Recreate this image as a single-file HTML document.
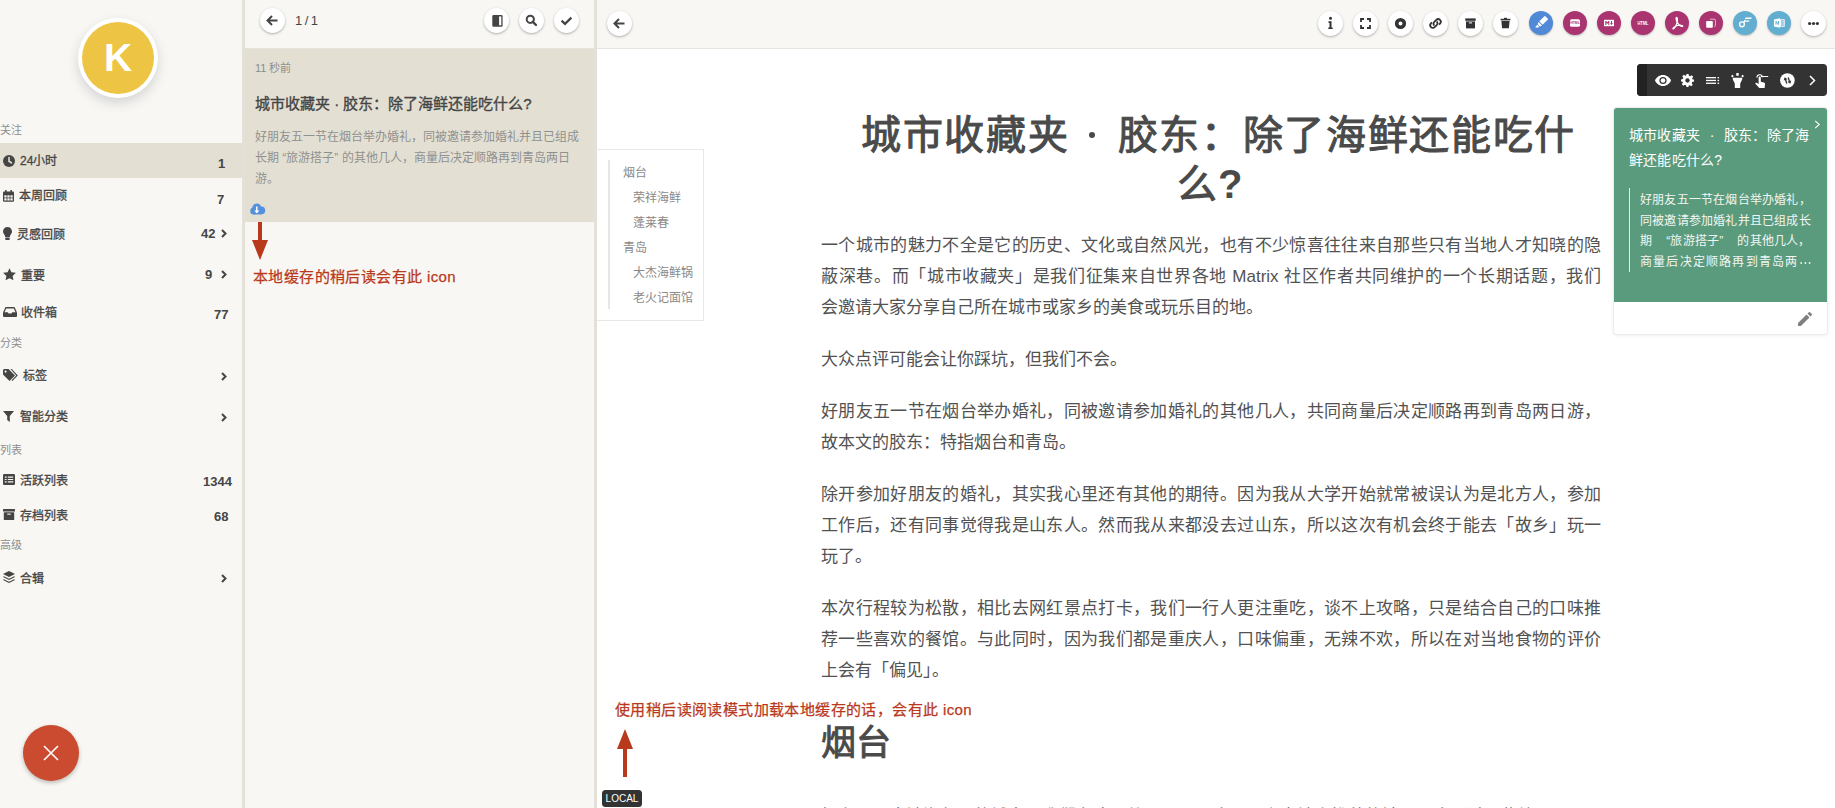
<!DOCTYPE html>
<html lang="zh-CN"><head><meta charset="utf-8">
<style>
*{box-sizing:border-box;margin:0;padding:0}
html,body{width:1835px;height:808px;overflow:hidden;background:#fff;font-family:"Liberation Sans",sans-serif;color:#444}
.a{position:absolute;white-space:nowrap}
#side{position:absolute;left:0;top:0;width:242px;height:808px;background:#f8f7f3}
.d1{position:absolute;top:0;height:808px;width:1px;background:#e2e1dc}
.d2{position:absolute;top:0;height:808px;width:2px;background:#e4e1d4}
#mid{position:absolute;left:245px;top:0;width:349px;height:808px;background:#f8f7f3}
#right{position:absolute;left:597px;top:0;width:1238px;height:808px;background:#fff}
.hdr{position:absolute;left:0;top:0;right:0;height:49px;background:#f8f7f3;border-bottom:1px solid #e6e4df}
.btn{position:absolute;width:25px;height:25px;border-radius:50%;background:#fff;box-shadow:0 1px 2.5px rgba(0,0,0,.3)}
.cb{position:absolute;width:24px;height:24px;border-radius:50%;box-shadow:0 1px 2px rgba(0,0,0,.25)}
.btn svg,.cb svg{position:absolute;left:0;top:0}
.lb{position:absolute;left:0;font-size:11px;color:#8e8e8e;line-height:14px}
.t{position:absolute;font-size:12px;color:#454545;line-height:16px;white-space:nowrap;-webkit-text-stroke:.3px #454545}
.n{position:absolute;font-size:13px;font-weight:bold;color:#454545;line-height:16px;white-space:nowrap}
.ic{position:absolute}
.toc{position:absolute;font-size:12px;color:#8a8a8a;line-height:16px;white-space:nowrap}
.p{position:absolute;left:224px;width:780px;font-size:17px;line-height:31px;color:#525252;text-align:justify}
.j{text-align-last:justify}
.p{white-space:nowrap}
.red{position:absolute;font-size:15px;color:#b9391c;line-height:18px;white-space:nowrap;-webkit-text-stroke:.25px #b9391c;letter-spacing:.4px}
</style></head><body>
<div id="side">
  <div class="a" style="left:78px;top:18px;width:80px;height:80px;border-radius:50%;background:#fff;box-shadow:0 5px 12px rgba(40,50,70,.17)"></div>
  <div class="a" style="left:82px;top:22px;width:72px;height:72px;border-radius:50%;background:#eec444;color:#fff;font-size:39px;font-weight:bold;text-align:center;line-height:72px">K</div>

  <div class="lb" style="top:123px">关注</div>
  <div class="a" style="left:0;top:143px;width:242px;height:35px;background:#e3e0d3"></div>
  <svg class="ic" style="left:3px;top:155px" width="12" height="12" viewBox="0 0 12 12"><circle cx="6" cy="6" r="6" fill="#454545"/><path d="M6 2.6V6.3L8.4 7.8" stroke="#e3e0d3" stroke-width="1.6" fill="none" stroke-linecap="round"/></svg>
  <div class="t" style="left:20px;top:153px">24小时</div>
  <div class="n" style="left:218px;top:156px">1</div>

  <svg class="ic" style="left:3px;top:189.5px" width="11" height="12" viewBox="0 0 11 12"><rect x="0" y="1.6" width="11" height="10.2" rx="1" fill="#454545"/><rect x="2" y="0" width="1.6" height="2.8" rx=".5" fill="#454545"/><rect x="7.4" y="0" width="1.6" height="2.8" rx=".5" fill="#454545"/><g fill="#f8f7f3"><rect x="1.3" y="5.3" width="2.3" height="2.2"/><rect x="4.35" y="5.3" width="2.3" height="2.2"/><rect x="7.4" y="5.3" width="2.3" height="2.2"/><rect x="1.3" y="8.3" width="2.3" height="2.2"/><rect x="4.35" y="8.3" width="2.3" height="2.2"/><rect x="7.4" y="8.3" width="2.3" height="2.2"/></g></svg>
  <div class="t" style="left:19px;top:188px">本周回顾</div>
  <div class="n" style="left:217px;top:192px">7</div>

  <svg class="ic" style="left:3px;top:227px" width="9" height="13" viewBox="0 0 9 13"><path d="M4.5 0C2 0 0 2 0 4.4c0 1.8 1.3 2.8 2 4.3V10h5V8.7c.7-1.5 2-2.5 2-4.3C9 2 7 0 4.5 0z" fill="#454545"/><rect x="2.2" y="10.6" width="4.6" height="2.4" rx="1" fill="#454545"/></svg>
  <div class="t" style="left:17px;top:227px">灵感回顾</div>
  <div class="n" style="left:201px;top:226px">42</div>
  <svg class="ic" style="left:221px;top:229px" width="6" height="9" viewBox="0 0 6 9"><path d="M1 1l3.5 3.5L1 8" stroke="#454545" stroke-width="2" fill="none"/></svg>

  <svg class="ic" style="left:3px;top:268px" width="13" height="13" viewBox="0 0 24 23"><path d="M12 0l3.5 7.4 8.3 1-6.1 5.7 1.6 8.2L12 18.3l-7.3 4 1.6-8.2L.2 8.4l8.3-1z" fill="#454545"/></svg>
  <div class="t" style="left:21px;top:268px">重要</div>
  <div class="n" style="left:205px;top:267px">9</div>
  <svg class="ic" style="left:221px;top:270px" width="6" height="9" viewBox="0 0 6 9"><path d="M1 1l3.5 3.5L1 8" stroke="#454545" stroke-width="2" fill="none"/></svg>

  <svg class="ic" style="left:3px;top:307px" width="14" height="10" viewBox="0 0 14 10"><path d="M2.5 0h9L14 5.5V9a1 1 0 0 1-1 1H1a1 1 0 0 1-1-1V5.5z" fill="#454545"/><path d="M3.2 1.6h7.6l1.7 3.6H9.3L8.4 6.6H5.6L4.7 5.2H1.5z" fill="#f8f7f3"/></svg>
  <div class="t" style="left:21px;top:305px">收件箱</div>
  <div class="n" style="left:214px;top:307px">77</div>

  <div class="lb" style="top:336px">分类</div>
  <svg class="ic" style="left:3px;top:369px" width="15" height="13" viewBox="0 0 15 13"><path d="M0 1v4.5l6.5 6.5 5.5-5.5L5.5 0H1z" fill="#454545"/><circle cx="2.6" cy="2.6" r="1.1" fill="#f8f7f3"/><path d="M7.5 0h1.3l6 6.5-5.5 5.5-.8-.7 4.7-4.8z" fill="#454545"/></svg>
  <div class="t" style="left:23px;top:368px">标签</div>
  <svg class="ic" style="left:221px;top:372px" width="6" height="9" viewBox="0 0 6 9"><path d="M1 1l3.5 3.5L1 8" stroke="#454545" stroke-width="2" fill="none"/></svg>

  <svg class="ic" style="left:3px;top:411px" width="11" height="11" viewBox="0 0 11 11"><path d="M0 0h11L6.8 5v6L4.2 9V5z" fill="#454545"/></svg>
  <div class="t" style="left:20px;top:409px">智能分类</div>
  <svg class="ic" style="left:221px;top:413px" width="6" height="9" viewBox="0 0 6 9"><path d="M1 1l3.5 3.5L1 8" stroke="#454545" stroke-width="2" fill="none"/></svg>

  <div class="lb" style="top:443px">列表</div>
  <svg class="ic" style="left:3px;top:474px" width="12" height="11" viewBox="0 0 12 11"><rect width="12" height="11" rx="1.2" fill="#454545"/><path d="M1.8 3.1h1.8M4.8 3.1h5.4M1.8 5.5h1.8M4.8 5.5h5.4M1.8 7.9h1.8M4.8 7.9h5.4" stroke="#f8f7f3" stroke-width="1.2"/></svg>
  <div class="t" style="left:20px;top:473px">活跃列表</div>
  <div class="n" style="left:203px;top:474px">1344</div>

  <svg class="ic" style="left:3px;top:509px" width="12" height="11" viewBox="0 0 12 11"><rect width="12" height="2.6" rx=".5" fill="#454545"/><rect x=".8" y="3.3" width="10.4" height="7.7" rx=".6" fill="#454545"/><rect x="4.3" y="4.6" width="3.4" height="1.1" fill="#f8f7f3"/></svg>
  <div class="t" style="left:20px;top:508px">存档列表</div>
  <div class="n" style="left:214px;top:509px">68</div>

  <div class="lb" style="top:538px">高级</div>
  <svg class="ic" style="left:3px;top:571px" width="12" height="12" viewBox="0 0 12 12"><path d="M6 0l6 3-6 3-6-3z" fill="#454545"/><path d="M.8 5.2L6 7.8l5.2-2.6L12 6 6 9 0 6z" fill="#454545"/><path d="M.8 8.2L6 10.8l5.2-2.6L12 9 6 12 0 9z" fill="#454545"/></svg>
  <div class="t" style="left:20px;top:571px">合辑</div>
  <svg class="ic" style="left:221px;top:574px" width="6" height="9" viewBox="0 0 6 9"><path d="M1 1l3.5 3.5L1 8" stroke="#454545" stroke-width="2" fill="none"/></svg>

  <div class="a" style="left:23px;top:725px;width:56px;height:56px;border-radius:50%;background:#cb4b31;box-shadow:0 2px 4px rgba(0,0,0,.25)"></div>
  <svg class="ic" style="left:43px;top:745px" width="16" height="16" viewBox="0 0 16 16"><path d="M1 1L15 15M15 1L1 15" stroke="#fff" stroke-width="1.6"/></svg>
</div>
<div class="d1" style="left:242px"></div><div class="d2" style="left:243px"></div>

<div id="mid">
  <div class="hdr"></div>
  <div class="btn" style="left:15px;top:8px"><svg width="25" height="25" viewBox="0 0 25 25"><path d="M17.5 12.5H8M12 8l-4.5 4.5L12 17" stroke="#454545" stroke-width="2" fill="none"/></svg></div>
  <div class="a" style="left:50px;top:13px;font-size:13px;color:#454545;line-height:16px;letter-spacing:-.6px">1 / 1</div>
  <div class="btn" style="left:239px;top:8px"><svg width="25" height="25" viewBox="0 0 25 25"><rect x="8.3" y="7" width="10.3" height="11.7" rx="1.3" fill="#454545"/><rect x="15.1" y="8.4" width="2.2" height="8.9" fill="#fff"/></svg></div>
  <div class="btn" style="left:274px;top:8px"><svg width="25" height="25" viewBox="0 0 25 25"><circle cx="11.3" cy="11.3" r="3.6" fill="none" stroke="#454545" stroke-width="2"/><path d="M13.8 13.8L17 17" stroke="#454545" stroke-width="2.4" stroke-linecap="round"/></svg></div>
  <div class="btn" style="left:309px;top:8px"><svg width="25" height="25" viewBox="0 0 25 25"><path d="M7.6 12.6l3.4 3.3 6.4-6.3" stroke="#454545" stroke-width="2.2" fill="none" stroke-linejoin="miter"/></svg></div>

  <div class="a" style="left:0;top:49px;width:349px;height:173px;background:#e3e0d3"></div>
  <div class="a" style="left:10px;top:61px;font-size:11px;color:#8c8c8c;line-height:14px">11 秒前</div>
  <div class="a" style="left:10px;top:95px;font-size:15px;color:#454545;line-height:18px;-webkit-text-stroke:.35px #454545">城市收藏夹 · 胶东：除了海鲜还能吃什么?</div>
  <div class="a" style="left:10px;top:127px;width:330px;font-size:12px;color:#909090;line-height:21px;white-space:normal">好朋友五一节在烟台举办婚礼，同被邀请参加婚礼并且已组成长期 “旅游搭子” 的其他几人，商量后决定顺路再到青岛两日游。</div>
  <svg class="ic" style="left:5px;top:202.5px" width="16" height="12" viewBox="0 0 16 12"><g fill="#5590dc"><circle cx="3.7" cy="8" r="3.5"/><circle cx="6.8" cy="5" r="4.6"/><circle cx="11.4" cy="7.4" r="3.8"/><rect x="3.7" y="7" width="7.7" height="4.5"/></g><path d="M6.8 3.6v5" stroke="#fff" stroke-width="1.5"/><path d="M4.3 7.6h5L6.8 10.4z" fill="#fff"/></svg>
  <svg class="ic" style="left:5.5px;top:222px" width="18" height="38" viewBox="0 0 18 38"><rect x="7" y="0" width="4" height="20" fill="#b9391c"/><path d="M1 18h16L9 38z" fill="#b9391c"/></svg>
  <div class="red" style="left:8px;top:268px">本地缓存的稍后读会有此 icon</div>
</div>
<div class="d1" style="left:594px"></div><div class="d2" style="left:595px"></div>

<div id="right">
  <div class="hdr"></div>
  <div class="btn" style="left:10px;top:11px"><svg width="25" height="25" viewBox="0 0 25 25"><path d="M17.5 12.5H8M12 8l-4.5 4.5L12 17" stroke="#454545" stroke-width="2" fill="none"/></svg></div>

  <div class="btn" style="left:721px;top:11px"><svg width="25" height="25" viewBox="0 0 25 25"><circle cx="12.5" cy="7.3" r="1.5" fill="#333"/><path d="M10.5 10.3h3v6.2h1.2v1.6h-4.4v-1.6h1.2v-4.6h-1z" fill="#333"/></svg></div>
  <div class="btn" style="left:756px;top:11px"><svg width="25" height="25" viewBox="0 0 25 25"><path d="M8 11V8h3M14 8h3v3M17 14v3h-3M11 17H8v-3" stroke="#333" stroke-width="1.8" fill="none"/></svg></div>
  <div class="btn" style="left:791px;top:11px"><svg width="25" height="25" viewBox="0 0 25 25"><circle cx="12.5" cy="12.5" r="3.8" fill="none" stroke="#333" stroke-width="3.6"/></svg></div>
  <div class="btn" style="left:826px;top:11px"><svg width="25" height="25" viewBox="0 0 25 25"><path d="M11.3 14.6a2.6 2.6 0 0 1 0-3.7l2-2a2.6 2.6 0 0 1 3.7 3.7l-1 1M13.7 10.4a2.6 2.6 0 0 1 0 3.7l-2 2a2.6 2.6 0 0 1-3.7-3.7l1-1" stroke="#333" stroke-width="1.8" fill="none"/></svg></div>
  <div class="btn" style="left:861px;top:11px"><svg width="25" height="25" viewBox="0 0 25 25"><rect x="7.3" y="7.4" width="10.4" height="2.4" fill="#333"/><rect x="8" y="10.4" width="9" height="7" fill="#333"/><rect x="11" y="11.4" width="3" height="1" fill="#fff"/></svg></div>
  <div class="btn" style="left:896px;top:11px"><svg width="25" height="25" viewBox="0 0 25 25"><rect x="7.6" y="7.8" width="9.8" height="1.6" fill="#333"/><rect x="11" y="6.8" width="3" height="1.2" fill="#333"/><path d="M8.4 10h8.2l-.7 7.2H9.1z" fill="#333"/></svg></div>
  <div class="cb" style="left:932px;top:11px;background:#508ad6"><svg width="24" height="24" viewBox="0 0 24 24"><g transform="rotate(45 13 11)"><rect x="10.6" y="4.5" width="4.8" height="8" rx=".6" fill="#fff"/><path d="M10.6 13.4h4.8l-.8 2.2h-3.2z" fill="#fff"/><path d="M11.8 16.2h2.4v1.6l-2.4 1.8z" fill="#fff"/></g></svg></div>
  <div class="cb" style="left:966px;top:11px;background:#a93470"><svg width="24" height="24" viewBox="0 0 24 24"><rect x="7" y="8.3" width="10" height="7.5" rx="1.6" fill="#fff"/><text x="12" y="13.2" font-size="3.4" font-family="Liberation Sans" font-weight="bold" text-anchor="middle" fill="#a93470">HTML</text></svg></div>
  <div class="cb" style="left:1000px;top:11px;background:#a93470"><svg width="24" height="24" viewBox="0 0 24 24"><rect x="7" y="8.8" width="10" height="6.4" fill="#fff"/><path d="M8.3 14V10h1l1 1.4 1-1.4h1v4h-1v-2.3l-1 1.2-1-1.2V14zM14 10h1v2.2h1l-1.5 1.8-1.5-1.8h1z" fill="#a93470"/></svg></div>
  <div class="cb" style="left:1034px;top:11px;background:#a93470"><svg width="24" height="24" viewBox="0 0 24 24"><text x="12" y="13.6" font-size="4.6" font-family="Liberation Sans" font-weight="bold" text-anchor="middle" fill="#fff" textLength="11" lengthAdjust="spacingAndGlyphs">HTML</text></svg></div>
  <div class="cb" style="left:1068px;top:11px;background:#a93470"><svg width="24" height="24" viewBox="0 0 24 24"><path d="M11.6 6.5c-.8 0-.6 2.4.6 4.8 1 2 2.6 3.8 4.5 4.1 1.4.2 1.5-.9-.3-1.1-2.4-.3-5.6.5-7.6 2.1-1.3 1.1-1 1.8-.2 1.3 1.5-1 3.1-4.6 3.6-7 .4-2.5.2-4.2-.6-4.2z" stroke="#fff" stroke-width="1.3" fill="none"/></svg></div>
  <div class="cb" style="left:1102px;top:11px;background:#a93470"><svg width="24" height="24" viewBox="0 0 24 24"><path d="M10.8 8.2h4.6a1 1 0 0 1 1 1v5.4a1 1 0 0 1-1 1" fill="none" stroke="rgba(255,255,255,.65)" stroke-width="1"/><rect x="7.2" y="10" width="6.6" height="6.8" rx=".8" fill="#fff"/></svg></div>
  <div class="cb" style="left:1136px;top:11px;background:#62aed0"><svg width="24" height="24" viewBox="0 0 24 24"><circle cx="9" cy="13.3" r="2.4" fill="none" stroke="#fff" stroke-width="1.4"/><path d="M12.6 6.6h6.4l-1 1.4h-6.2zM11.4 9.4h5.2l-1 1.4h-5z" fill="#fff"/><path d="M10.6 11.6l1.6-2.6" stroke="#fff" stroke-width="1.2"/></svg></div>
  <div class="cb" style="left:1170px;top:11px;background:#62aed0"><svg width="24" height="24" viewBox="0 0 24 24"><path d="M7 8.5l6.2-1.2v9.4L7 15.5z" fill="#fff"/><path d="M8.5 13.8V10h.9l1.6 2.4V10h.9v3.8h-.9L9.4 11.4v2.4z" fill="#62aed0"/><rect x="13.6" y="8.8" width="3.6" height="6.4" fill="none" stroke="#fff" stroke-width="1"/><path d="M13.6 10.9h3.6M13.6 13h3.6" stroke="#fff" stroke-width=".8"/></svg></div>
  <div class="btn" style="left:1204px;top:11px"><svg width="25" height="25" viewBox="0 0 25 25"><circle cx="8.6" cy="12.5" r="1.6" fill="#333"/><circle cx="12.5" cy="12.5" r="1.6" fill="#333"/><circle cx="16.4" cy="12.5" r="1.6" fill="#333"/></svg></div>

  <div class="a" style="left:1040px;top:64px;width:190px;height:32px;border-radius:4px;background:#333;overflow:hidden"><div class="a" style="left:0;top:0;width:10px;height:32px;background:#222"></div></div>
  <svg class="ic" style="left:1058px;top:75px" width="16" height="11" viewBox="0 0 16 11"><path d="M8 0C4.2 0 1.4 2.4 0 5.5 1.4 8.6 4.2 11 8 11s6.6-2.4 8-5.5C14.6 2.4 11.8 0 8 0z" fill="#fff"/><circle cx="8" cy="5.5" r="3.6" fill="#333"/><circle cx="8" cy="5.5" r="2.3" fill="#fff"/></svg>
  <svg class="ic" style="left:1084px;top:74px" width="13" height="13" viewBox="0 0 24 24"><path d="M10 0h4l.7 3.3 2.2.9 2.8-1.9 2.8 2.8-1.9 2.8.9 2.2L24 10v4l-3.3.7-.9 2.2 1.9 2.8-2.8 2.8-2.8-1.9-2.2.9L14 24h-4l-.7-3.3-2.2-.9-2.8 1.9-2.8-2.8 1.9-2.8-.9-2.2L0 14v-4l3.3-.7.9-2.2-1.9-2.8 2.8-2.8 2.8 1.9 2.2-.9z" fill="#fff"/><circle cx="12" cy="12" r="4" fill="#333"/></svg>
  <svg class="ic" style="left:1109px;top:76px" width="14" height="9" viewBox="0 0 14 9"><g fill="#fff"><rect x="0" y="1" width="10" height="1.3"/><rect x="0" y="3.8" width="10" height="1.3"/><rect x="0" y="6.6" width="10" height="1.3"/><rect x="11.5" y="1" width="1.6" height="1.3"/><rect x="11.5" y="3.8" width="1.6" height="1.3"/><rect x="11.5" y="6.6" width="1.6" height="1.3"/></g></svg>
  <svg class="ic" style="left:1133px;top:72px" width="15" height="17" viewBox="0 0 15 17"><path d="M2.8 5.8h9.4v1.6L10.2 11.6V16H4.8V11.6L2.8 7.4z" fill="#fff"/><rect x="6.3" y="1" width="2.4" height="2.8" fill="#fff"/><path d="M2.4 2.7l1.4 1.4-1.4 1.4L1 4.1zM12.6 2.7l1.4 1.4-1.4 1.4-1.4-1.4z" fill="#fff"/></svg>
  <svg class="ic" style="left:1158px;top:73px" width="14" height="15" viewBox="0 0 14 15"><path d="M3.6 4.6a1.1 1.1 0 0 1 2.2 0v4.2l3 .6c.9.2 1.3.8 1.2 1.7L9.6 15H4.3L.6 10.9c-.6-.7.2-1.6 1-1.1l2 1.2z" fill="#fff"/><path d="M2 4.6a2.7 2.7 0 0 1 5.4-.4M6 3.5h7.2" stroke="#fff" stroke-width="1.1" fill="none"/></svg>
  <svg class="ic" style="left:1183px;top:73px" width="15" height="15" viewBox="0 0 15 15"><circle cx="7.4" cy="7.5" r="7.3" fill="#fff"/><g transform="rotate(-18 7.5 7.5)"><path d="M5.9 10.2V4.6" stroke="#333" stroke-width="1.3"/><path d="M3.9 6.2l2-2.6 2 2.6z" fill="#333"/><path d="M9.1 4.8v5.6" stroke="#333" stroke-width="1.3"/><path d="M7.1 8.8l2 2.6 2-2.6z" fill="#333"/></g></svg>
  <svg class="ic" style="left:1212px;top:75px" width="7" height="11" viewBox="0 0 7 11"><path d="M1 1l4.5 4.5L1 10" stroke="#fff" stroke-width="1.5" fill="none"/></svg>

  <div class="a" style="left:1017px;top:108px;width:213px;height:226px;border-radius:3px;background:#fff;box-shadow:0 0 0 1px #ececec,0 1px 4px rgba(0,0,0,.10);overflow:hidden">
    <div class="a" style="left:0;top:0;width:213px;height:194px;background:#5b9b7d"></div>
    <svg class="ic" style="left:200px;top:12px" width="7" height="9" viewBox="0 0 7 9"><path d="M1.2 .8l4 3.7-4 3.7" stroke="#fff" stroke-width="1.1" fill="none"/></svg>
    <div class="a" style="left:15px;top:15px;font-size:14px;line-height:25px;color:#fff;letter-spacing:.2px">城市收藏夹<span style="display:inline-block;width:24px;text-align:center;letter-spacing:0">·</span>胶东：除了海</div>
    <div class="a" style="left:15px;top:40px;font-size:14px;line-height:25px;color:#fff;letter-spacing:.2px">鲜还能吃什么?</div>
    <div class="a" style="left:15px;top:80px;width:1px;height:84px;background:#e6efe9"></div>
    <div class="a" style="left:26px;top:82px;font-size:12px;line-height:20.7px;color:#f2f6f3;letter-spacing:.2px">好朋友五一节在烟台举办婚礼，<br>同被邀请参加婚礼并且已组成长<br>期<span style="display:inline-block;width:14px"></span>“旅游搭子”<span style="display:inline-block;width:14px"></span>的其他几人，<br><span style="letter-spacing:1.2px">商量后决定顺路再到青岛两</span><svg width="14" height="10" viewBox="0 0 14 10" style="vertical-align:-1px"><circle cx="3.2" cy="6" r=".9" fill="#f2f6f3"/><circle cx="7.4" cy="6" r=".9" fill="#f2f6f3"/><circle cx="11.6" cy="6" r=".9" fill="#f2f6f3"/></svg></div>
    <svg class="ic" style="left:184px;top:204px" width="14" height="14" viewBox="0 0 14 14"><path d="M0 11.1V14h2.9l8.6-8.6-2.9-2.9zM13.8 3.1a.8.8 0 0 0 0-1.1L12 .2a.8.8 0 0 0-1.1 0L9.5 1.6l2.9 2.9z" fill="#808080"/></svg>
  </div>
  <div class="a" style="left:0;top:149px;width:107px;height:172px;background:#fff;border:1px solid #e8e8e8;border-left:none"></div>
  <div class="a" style="left:11px;top:160px;width:2px;height:149px;background:#e6e6e6"></div>
  <div class="toc" style="left:26px;top:165px">烟台</div>
  <div class="toc" style="left:36px;top:190px">荣祥海鲜</div>
  <div class="toc" style="left:36px;top:215px">蓬莱春</div>
  <div class="toc" style="left:26px;top:240px">青岛</div>
  <div class="toc" style="left:36px;top:265px">大杰海鲜锅</div>
  <div class="toc" style="left:36px;top:290px">老火记面馆</div>

  <div class="a" style="left:264px;top:110px;font-size:40px;line-height:50px;color:#4a4a4a;letter-spacing:1.7px;-webkit-text-stroke:1px #4a4a4a">城市收藏夹<span style="display:inline-block;width:48px;height:50px;vertical-align:top;position:relative"><i style="position:absolute;left:19px;top:21.5px;width:6.6px;height:6.6px;border-radius:50%;background:#4a4a4a"></i></span>胶东：除了海鲜还能吃什</div>
  <div class="a" style="left:580px;top:159px;font-size:40px;line-height:50px;color:#4a4a4a;letter-spacing:1px;-webkit-text-stroke:1px #4a4a4a">么<b style="-webkit-text-stroke:0">?</b></div>
  <div class="p j" style="top:230px">一个城市的魅力不全是它的历史、文化或自然风光，也有不少惊喜往往来自那些只有当地人才知晓的隐</div>
  <div class="p j" style="top:261px">蔽深巷。而「城市收藏夹」是我们征集来自世界各地 Matrix 社区作者共同维护的一个长期话题，我们</div>
  <div class="p" style="top:292px">会邀请大家分享自己所在城市或家乡的美食或玩乐目的地。</div>
  <div class="p" style="top:344px">大众点评可能会让你踩坑，但我们不会。</div>
  <div class="p j" style="top:396px">好朋友五一节在烟台举办婚礼，同被邀请参加婚礼的其他几人，共同商量后决定顺路再到青岛两日游，</div>
  <div class="p" style="top:427px">故本文的胶东：特指烟台和青岛。</div>
  <div class="p j" style="top:479px">除开参加好朋友的婚礼，其实我心里还有其他的期待。因为我从大学开始就常被误认为是北方人，参加</div>
  <div class="p j" style="top:510px">工作后，还有同事觉得我是山东人。然而我从来都没去过山东，所以这次有机会终于能去「故乡」玩一</div>
  <div class="p" style="top:541px">玩了。</div>
  <div class="p j" style="top:593px">本次行程较为松散，相比去网红景点打卡，我们一行人更注重吃，谈不上攻略，只是结合自己的口味推</div>
  <div class="p j" style="top:624px">荐一些喜欢的餐馆。与此同时，因为我们都是重庆人，口味偏重，无辣不欢，所以在对当地食物的评价</div>
  <div class="p" style="top:655px">上会有「偏见」。</div>
  <div class="a" style="left:224px;top:718px;font-size:35px;line-height:50px;color:#4a4a4a;-webkit-text-stroke:.9px #4a4a4a">烟台</div>
  <div class="p j" style="top:801px">烟台是一座被海包围的城市，我们在这里待了两天，吃了不少当地人推荐的馆子，也踩过一些坑，下面是</div>
  <div class="red" style="left:18px;top:701px">使用稍后读阅读模式加载本地缓存的话，会有此 icon</div>
  <svg class="ic" style="left:18.5px;top:729px" width="18" height="48" viewBox="0 0 18 48"><path d="M9 0L17 20H1z" fill="#b9391c"/><rect x="7" y="18" width="4" height="30" fill="#b9391c"/></svg>
  <div class="a" style="left:5px;top:790px;width:40px;height:17px;border-radius:3.5px;background:#333;color:#fff;font-size:10px;line-height:17px;text-align:center">LOCAL</div>
</div>
</body></html>
